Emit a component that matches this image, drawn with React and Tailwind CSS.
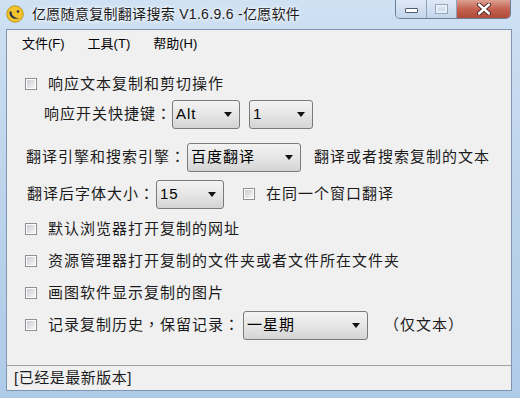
import React from "react";

const FONT = { fontFamily: "'Liberation Sans', 'Noto Sans CJK SC', sans-serif" };

// full-width punctuation centred in its cell, as in the old Windows font
function P({ children }) {
  return <span className="font-['Noto_Sans_CJK_TC',sans-serif]">{children}</span>;
}

function CheckBox() {
  return (
    <span className="flex w-[12px] h-[12px] shrink-0 border border-[#8e8f8f] bg-white p-[1px]">
      <span className="flex-1 bg-gradient-to-br from-[#c9ccd1] to-[#f7f7f7]" />
    </span>
  );
}

function Combo({ value, width }) {
  return (
    <div
      className={`flex items-center shrink-0 h-[29px] ${width} rounded-[3px] border border-[#7a7a7a] bg-gradient-to-b from-[#f3f3f3] via-[#e6e6e6] to-[#d4d4d4] pl-[3px] pr-[7px]`}
    >
      <span className="flex-1 text-[15px] text-black tracking-[1px] whitespace-nowrap">{value}</span>
      <svg width="8" height="5" viewBox="0 0 8 5">
        <path d="M0 0h8L4 5z" fill="#111" />
      </svg>
    </div>
  );
}

function Label({ className = "", children }) {
  return (
    <span className={`shrink-0 whitespace-nowrap text-[15px] tracking-[1px] ${className}`}>
      {children}
    </span>
  );
}

function CheckRow({ label, className = "" }) {
  return (
    <div className={`flex items-center h-[20px] pl-[18px] gap-[11px] ${className}`}>
      <CheckBox />
      <Label className="text-[#1b1b1b]">{label}</Label>
    </div>
  );
}

function CaptionButtons() {
  return (
    <div className="flex h-[19px] mr-[9px] rounded-b-[5px] border border-t-0 border-[#6b7f9c] overflow-hidden">
      <div className="flex items-center justify-center w-[31px] bg-gradient-to-b from-[#dfe9f5] to-[#c3d5ea] border-r border-[#8fa3bd]">
        <span className="block w-[13px] h-[5px] mt-[3px] bg-white border border-[#4d5b70] rounded-[1px]" />
      </div>
      <div className="flex items-center justify-center w-[30px] bg-gradient-to-b from-[#dfe9f5] to-[#c3d5ea] border-r border-[#8fa3bd]">
        <span className="block w-[11px] h-[8px] border-[2px] border-[#eef3f9] outline outline-1 outline-[#8799b3] opacity-80" />
      </div>
      <div className="flex items-center justify-center w-[53px] bg-gradient-to-b from-[#dba093] via-[#c4614f] to-[#b04b3a]">
        <svg width="16" height="12" viewBox="0 0 16 12">
          <path d="M3 1.5l10 9M13 1.5l-10 9" stroke="#3b1d18" strokeWidth="4.2" strokeLinecap="round" />
          <path d="M3 1.5l10 9M13 1.5l-10 9" stroke="#ffffff" strokeWidth="2.4" strokeLinecap="round" />
        </svg>
      </div>
    </div>
  );
}

export default function App() {
  return (
    <div
      className="flex flex-col w-[520px] h-[398px] overflow-hidden bg-gradient-to-b from-[#cfe1f3] via-[#bcd3eb] to-[#aecbe8]"
      style={FONT}
    >
      {/* Title bar */}
      <div className="flex items-start h-[29px] shrink-0">
        <svg className="ml-[6px] mt-[5px]" width="18" height="18" viewBox="0 0 18 18">
          <circle cx="9" cy="9" r="8.3" fill="#f1c22c" stroke="#b58a12" strokeWidth="0.8" />
          <path d="M3.5 6.5 C3 12 8 15.5 13.5 13 C9 13.5 5.5 11 5.5 6.5 Z" fill="#1f2d4e" />
          <circle cx="12" cy="6.5" r="1.3" fill="#1f2d4e" />
        </svg>
        <span className="ml-[8px] mt-[5px] text-[14px] leading-[18px] text-[#1a1a1a] tracking-[0.3px] [text-shadow:0_0_6px_#ffffff,0_0_3px_#ffffff]">
          亿愿随意复制翻译搜索 V1.6.9.6 -亿愿软件
        </span>
        <div className="ml-auto">
          <CaptionButtons />
        </div>
      </div>

      {/* Client area */}
      <div className="flex flex-col flex-1 ml-[6px] mr-[8px] mb-[7px] bg-[#f0f0f0] border border-[#7f96b3]">
        {/* Menu */}
        <div className="flex items-center h-[28px] pl-[15px] gap-[23px] text-[13px] text-black">
          <span>文件(F)</span>
          <span>工具(T)</span>
          <span>帮助(H)</span>
        </div>

        {/* Content */}
        <div className="flex flex-col flex-1 text-[#1b1b1b]">
          <CheckRow label="响应文本复制和剪切操作" className="mt-[16px]" />

          <div className="flex items-center h-[30px] mt-[5px] pl-[37px]">
            <Label className="w-[128px]">响应开关快捷键<P>：</P></Label>
            <Combo value="Alt" width="w-[68px]" />
            <div className="ml-[9px]">
              <Combo value="1" width="w-[64px]" />
            </div>
          </div>

          <div className="flex items-center h-[30px] mt-[13px] pl-[19px]">
            <Label className="w-[161px]">翻译引擎和搜索引擎<P>：</P></Label>
            <Combo value="百度翻译" width="w-[114px]" />
            <Label className="ml-[13px]">翻译或者搜索复制的文本</Label>
          </div>

          <div className="flex items-center h-[30px] mt-[7px] pl-[20px]">
            <Label className="w-[129px]">翻译后字体大小<P>：</P></Label>
            <Combo value="15" width="w-[68px]" />
            <div className="flex items-center ml-[19px] gap-[11px]">
              <CheckBox />
              <Label>在同一个窗口翻译</Label>
            </div>
          </div>

          <CheckRow label="默认浏览器打开复制的网址" className="mt-[10px]" />
          <CheckRow label="资源管理器打开复制的文件夹或者文件所在文件夹" className="mt-[12px]" />
          <CheckRow label="画图软件显示复制的图片" className="mt-[12px]" />

          <div className="flex items-center h-[30px] mt-[7px] pl-[18px]">
            <CheckBox />
            <Label className="ml-[11px] w-[195px]">
              记录复制历史<P>，</P>保留记录<P>：</P>
            </Label>
            <Combo value="一星期" width="w-[125px]" />
            <Label className="ml-[16px]">
              <P>（</P>仅文本<P>）</P>
            </Label>
          </div>
        </div>

        {/* Status bar */}
        <div className="flex items-center h-[25px] border-t border-[#a0a0a0] pl-[7px] text-[15px] tracking-[0.5px] text-[#1b1b1b]">
          [已经是最新版本]
        </div>
      </div>
    </div>
  );
}
